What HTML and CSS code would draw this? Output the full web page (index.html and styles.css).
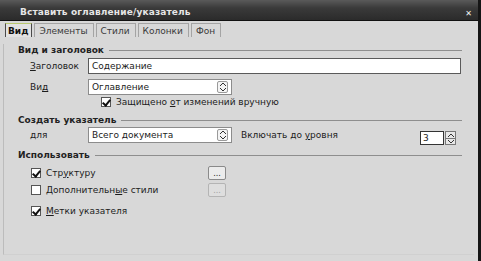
FILE: index.html
```html
<!DOCTYPE html>
<html lang="ru">
<head>
    <meta charset="UTF-8">
    <title>Вставить оглавление/указатель</title>
    <link rel="stylesheet" href="styles.css">
</head>
<body>
<div class="window">
    <div class="titlebar">
        <span class="title">Вставить оглавление/указатель</span>
        <span class="close">✕</span>
    </div>
    <div class="tabs">
        <span class="tab active">Вид</span>
        <span class="tab">Элементы</span>
        <span class="tab">Стили</span>
        <span class="tab">Колонки</span>
        <span class="tab">Фон</span>
    </div>
    <div class="pane">
        <div class="section-head h1"><span>Вид и заголовок</span><i></i></div>
        <div class="row r-title">
            <label class="lbl"><u>З</u>аголовок</label>
            <div class="textbox wide">Содержание</div>
        </div>
        <div class="row r-kind">
            <label class="lbl">Ви<u>д</u></label>
            <div class="select">Оглавление<span class="spin"></span></div>
        </div>
        <div class="row r-protect">
            <span class="check on"></span>
            <span>Защищено <u>о</u>т изменений вручную</span>
        </div>

        <div class="section-head h2"><span>Создать указатель</span><i></i></div>
        <div class="row r-for">
            <label class="lbl">для</label>
            <div class="select">Всего документа<span class="spin"></span></div>
            <span class="level">Включать до <u>у</u>ровня</span>
            <div class="numbox"><span class="num">3</span><span class="numspin"></span></div>
        </div>

        <div class="section-head h3"><span>Использовать</span><i></i></div>
        <div class="row r-use1">
            <span class="check on"></span>
            <span class="use-text">Стр<u>у</u>ктуру</span>
            <span class="dots">...</span>
        </div>
        <div class="row r-use2">
            <span class="check"></span>
            <span class="use-text">Дополнительн<u>ы</u>е стили</span>
            <span class="dots off">...</span>
        </div>
        <div class="row r-use3">
            <span class="check on"></span>
            <span class="use-text"><u>М</u>етки указателя</span>
        </div>
    </div>
</div>
</body>
</html>
```

FILE: styles.css
```css
body {
    margin: 0;
    background: #d8d8d8;
    font-family: "DejaVu Sans", "Noto Sans", sans-serif;
    font-size: 9px;
    color: #1c1c1c;
}

.window {
    width: 478px;
    height: 261px;
    border-right: 3px solid #151515;
    background: #d8d8d8;
    overflow: hidden;
}

.titlebar {
    height: 20px;
    display: flex;
    align-items: center;
    justify-content: space-between;
    padding: 0 6px 0 20px;
    background: linear-gradient(#5a5a5a, #3a3a3a 40%, #2b2b2b);
    border-bottom: 1px solid #111;
}

.title {
    color: #e6e6e6;
    font-weight: bold;
    padding-top: 3px;
    letter-spacing: 0.15px;
}

.close {
    color: #f0f0f0;
    font-size: 8px;
    font-weight: bold;
    padding-top: 6px;
}

.tabs {
    display: flex;
    margin-top: 2px;
    padding-left: 5px;
    height: 14px;
}

.tab {
    display: flex;
    align-items: center;
    padding: 0 5px 0 4px;
    border: 1px solid #a4a4a4;
    border-bottom: none;
    margin-right: 2px;
    color: #3a3a3a;
}

.tab.active {
    font-weight: bold;
    color: #111;
    border-color: #4a4a4a;
    border-top: 1px solid #b8c870;
    background: #e2e2e2;
    padding: 0 3px 0 2px;
}

.pane {
    margin-left: 3px;
    width: 470px;
    height: 210px;
    border-left: 1px solid #bcbcbc;
    border-bottom: 1px solid #d0d0d0;
    white-space: nowrap;
}

.section-head {
    display: flex;
    align-items: center;
    height: 12px;
    width: 444px;
    margin-left: 14px;
    font-weight: bold;
    color: #222;
}

.section-head i {
    flex: 1;
    height: 1px;
    background: #8e8e8e;
    margin-left: 5px;
    margin-top: 1px;
}

.h1 { margin-top: 7px; }
.h2 { margin-top: 6px; }
.h3 { margin-top: 6px; }

.row {
    display: flex;
    align-items: center;
}

.row > * {
    flex-shrink: 0;
}

.lbl {
    width: 58px;
    margin-left: 26px;
}

.textbox, .select {
    height: 14px;
    display: flex;
    align-items: center;
    padding-left: 3px;
    background: #fff;
    border: 1px solid #5a5a5a;
}

.wide {
    width: 368px;
}

.r-title { margin-top: 2px; height: 16px; }
.r-kind { margin-top: 5px; height: 16px; }
.r-for { margin-top: 1px; height: 16px; }

.select {
    width: 139px;
    border-color: #8c8c8c;
    justify-content: space-between;
}

.spin {
    width: 9px;
    height: 10px;
    margin-right: 3px;
    border: 1px solid #9a9a9a;
    border-radius: 2px;
    background:
        linear-gradient(135deg, transparent 45%, #333 45%, #333 60%, transparent 60%) 2px 1px / 3px 3px no-repeat,
        linear-gradient(225deg, transparent 45%, #333 45%, #333 60%, transparent 60%) 5px 1px / 3px 3px no-repeat,
        linear-gradient(45deg, transparent 45%, #333 45%, #333 60%, transparent 60%) 2px 6px / 3px 3px no-repeat,
        linear-gradient(315deg, transparent 45%, #333 45%, #333 60%, transparent 60%) 5px 6px / 3px 3px no-repeat,
        #f4f4f4;
}

.r-protect {
    margin-top: 1px;
    height: 12px;
    padding-left: 97px;
}

.check {
    width: 8px;
    height: 8px;
    border: 1px solid #555;
    background: #fff;
    margin-right: 5px;
    position: relative;
}

.check.on::after {
    content: "";
    position: absolute;
    left: 2px;
    top: 0;
    width: 3px;
    height: 6px;
    border: solid #111;
    border-width: 0 2px 2px 0;
    transform: rotate(40deg);
}

.level {
    margin-left: 9px;
    width: 179px;
}

.numbox {
    display: flex;
    margin-top: 5px;
}

.num {
    width: 20px;
    height: 12px;
    padding-left: 2px;
    background: #fff;
    border: 1px solid #333;
    display: flex;
    align-items: center;
}

.numspin {
    width: 9px;
    height: 12px;
    margin-left: 1px;
    border: 1px solid #777;
    background:
        linear-gradient(135deg, transparent 45%, #333 45%, #333 60%, transparent 60%) 2px 2px / 3px 3px no-repeat,
        linear-gradient(225deg, transparent 45%, #333 45%, #333 60%, transparent 60%) 5px 2px / 3px 3px no-repeat,
        linear-gradient(#777, #777) 0 6px / 9px 1px no-repeat,
        linear-gradient(45deg, transparent 45%, #333 45%, #333 60%, transparent 60%) 2px 8px / 3px 3px no-repeat,
        linear-gradient(315deg, transparent 45%, #333 45%, #333 60%, transparent 60%) 5px 8px / 3px 3px no-repeat,
        #e8e8e8;
}

.r-use1, .r-use2, .r-use3 {
    padding-left: 27px;
}

.r-use1 { margin-top: 5px; height: 13px; }
.r-use2 { margin-top: 4px; height: 14px; }
.r-use3 { margin-top: 8px; height: 12px; }

.use-text {
    width: 162px;
}

.dots {
    width: 16px;
    height: 12px;
    border: 1px solid #8a8a8a;
    border-radius: 2px;
    background: #ececec;
    display: flex;
    justify-content: center;
    align-items: flex-end;
    font-size: 8px;
    line-height: 10px;
}

.dots.off {
    color: #a0a0a0;
    border-color: #b4b4b4;
    background: #dedede;
}
```
